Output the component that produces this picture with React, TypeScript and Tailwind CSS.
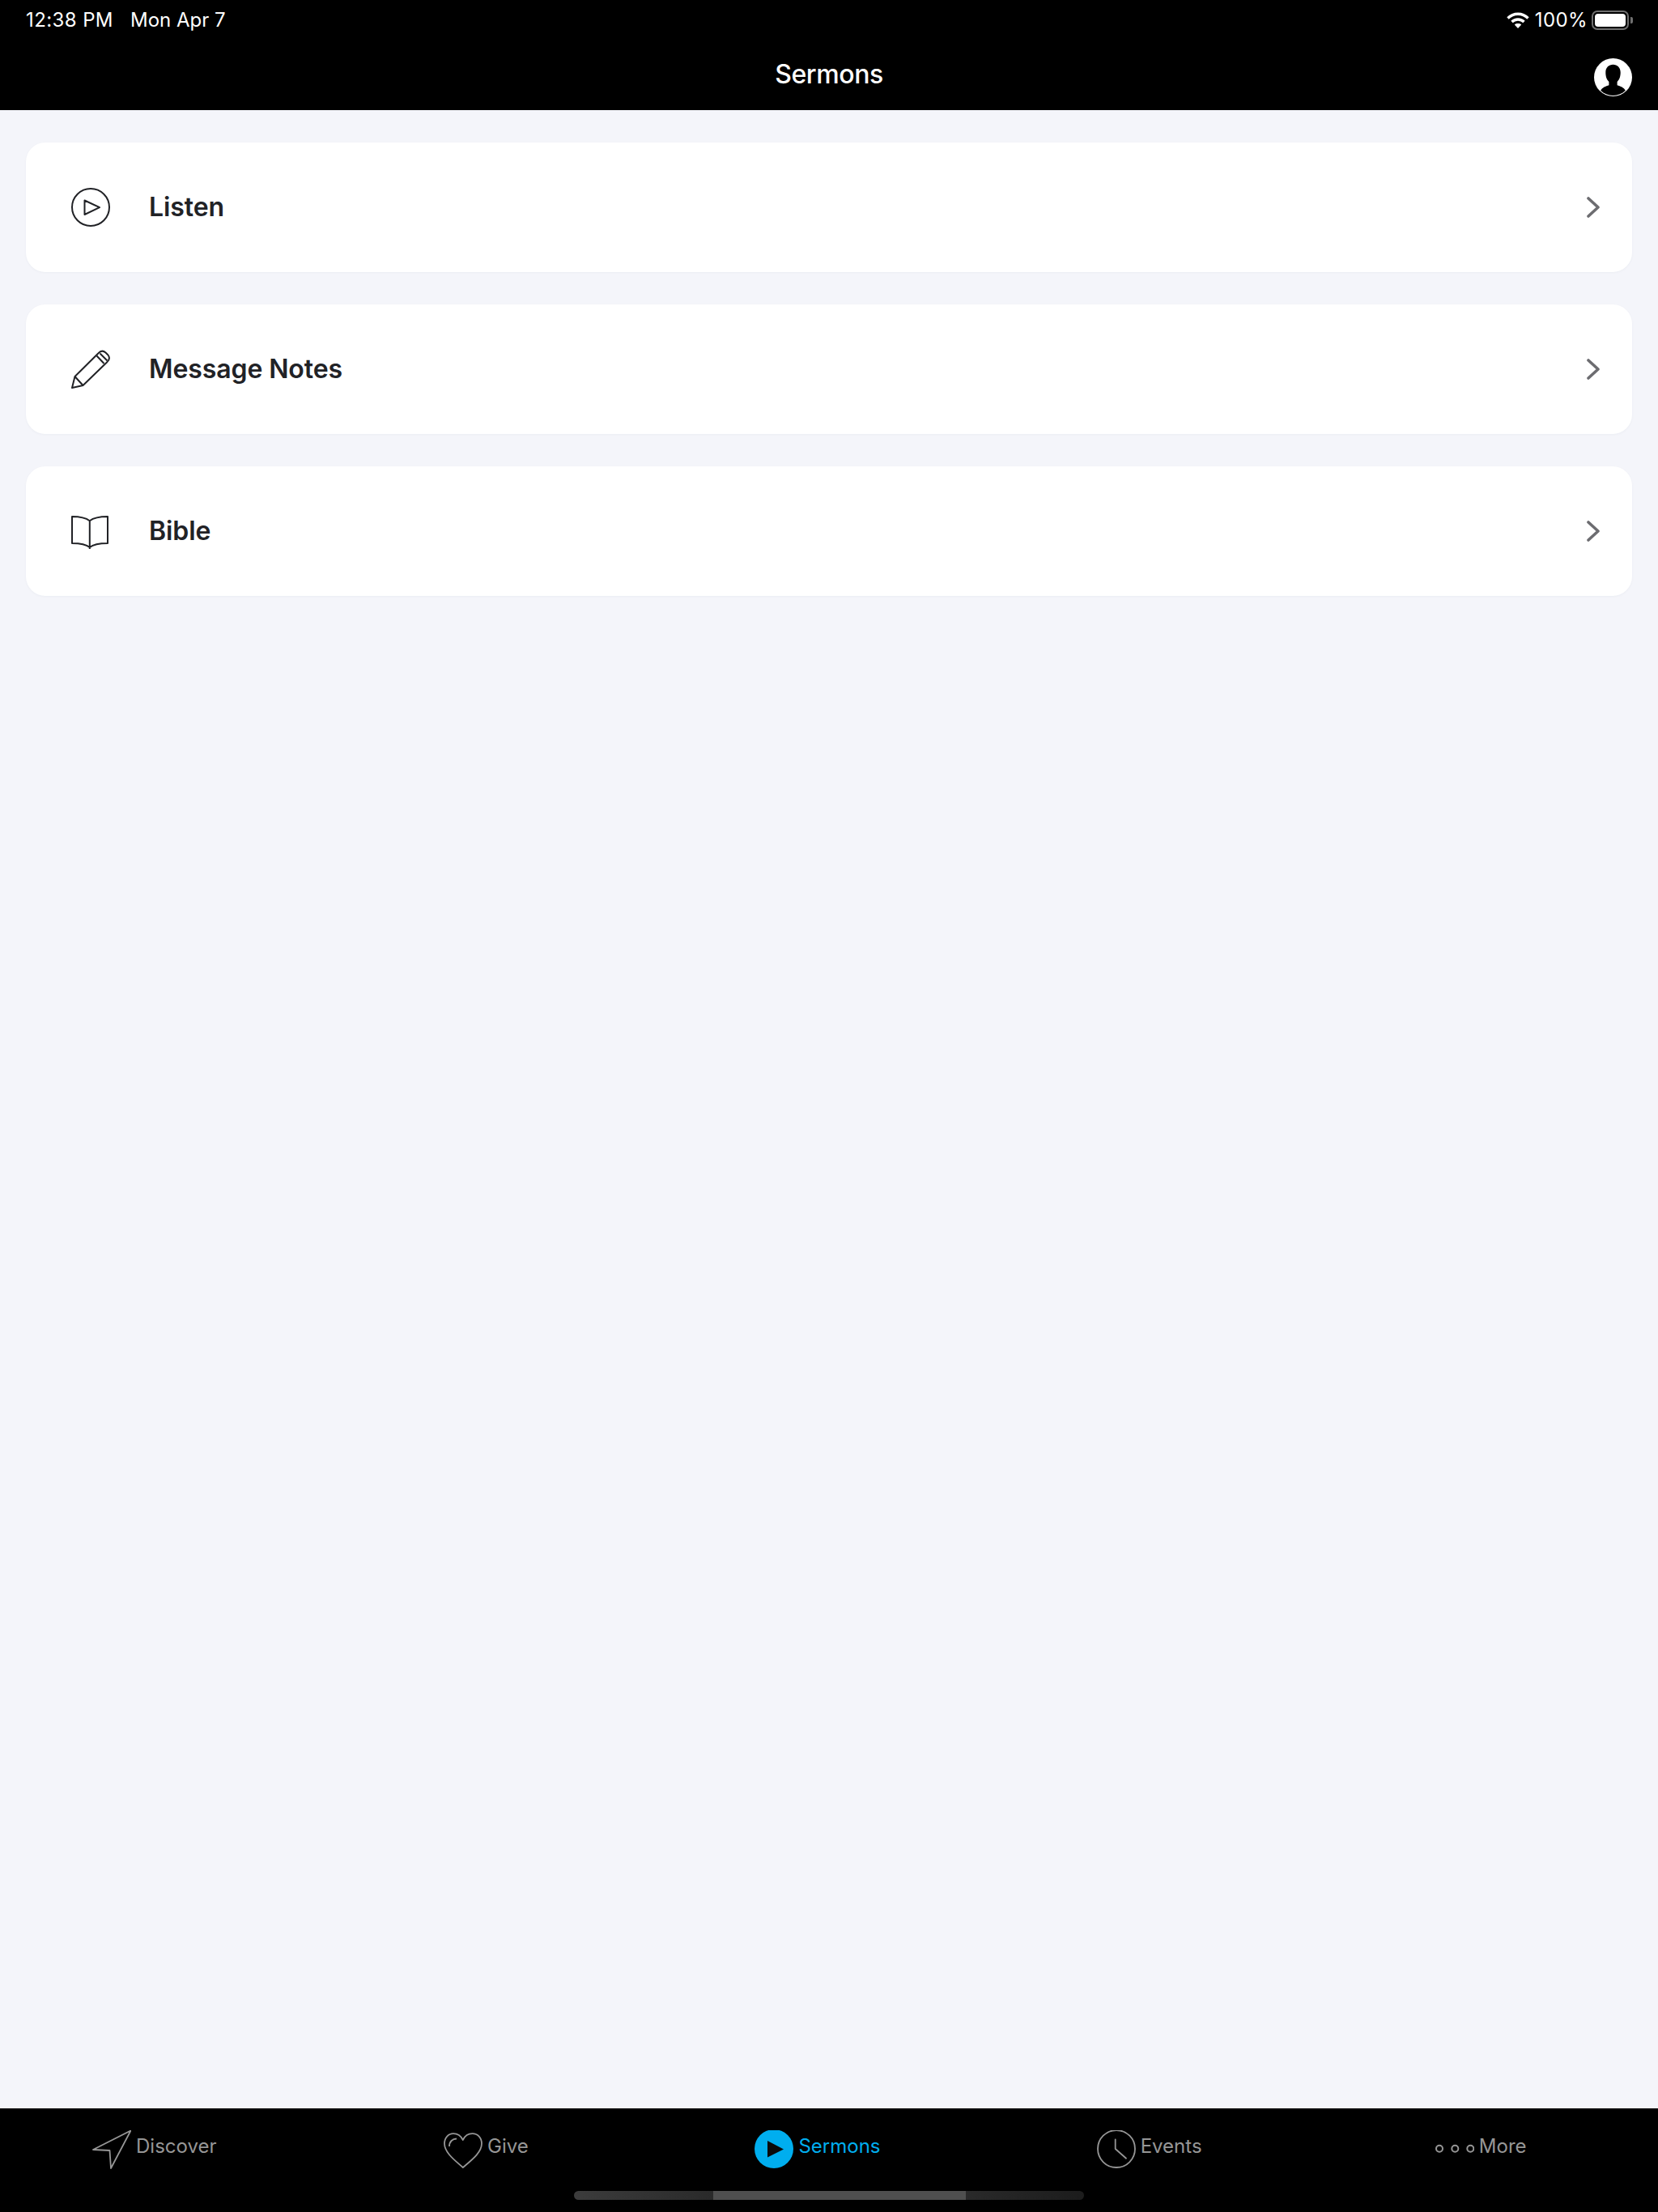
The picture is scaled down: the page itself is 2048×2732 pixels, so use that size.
import React from 'react';

const menuItems = [
  { label: 'Listen', icon: 'play' },
  { label: 'Message Notes', icon: 'pencil' },
  { label: 'Bible', icon: 'book' },
];

const MenuIcon: React.FC<{ name: string }> = ({ name }) => (
  <svg width="48" height="48" viewBox="0 0 48 48" fill="none" stroke="#212226" strokeWidth="2" strokeLinejoin="round" className="shrink-0">
    {name === 'play' && (
      <>
        <circle cx="24" cy="24" r="23" />
        <path d="M16.5 15.5V33L35 24.2Z" />
      </>
    )}
    {name === 'pencil' && (
      <>
        <path d="M1 47L4.5 33L33.5 4.2Q38 -0.5 42.5 3.5L45.5 6.5Q49 11 44 15.5L14.5 44Z" />
        <path d="M4.5 33L14.5 44M31.5 7.5L40.5 17M35.5 4.5L44.5 13.5" />
      </>
    )}
    {name === 'book' && <path d="M22.8 11.3C18 7.5 10 6 1 6V39C10 39 18 40 22.8 44C27.5 40 36 39 45 39V6C36 6 27.5 7.5 22.8 11.3V46" />}
  </svg>
);

const TabIcon: React.FC<{ name: string }> = ({ name }) => (
  <svg width="48" height="48" viewBox="0 0 48 48" fill="none" stroke="#969696" strokeWidth="1.8" strokeLinejoin="round" className="shrink-0">
    {name === 'discover' && <path d="M47.5 0.5L1 24L21.5 25L23 47Z" />}
    {name === 'give' && (
      <>
        <path d="M23.8 46C15 38 1 28 1 16.5C1 9 6 4.2 12 4.2C17 4.2 21.5 7.5 23.8 12C26 7.5 30.5 4.2 35.5 4.2C42 4.2 47 9 47 16.5C47 28 33 38 23.8 46Z" />
        <path d="M7 20C7 14 11 10.5 16 10.5" />
      </>
    )}
    {name === 'sermons' && (
      <>
        <circle cx="24" cy="23" r="24" fill="#00aeef" stroke="none" />
        <path d="M16 13L36 23.5L16 33.5Z" fill="#0a0a0a" stroke="none" />
      </>
    )}
    {name === 'events' && (
      <>
        <circle cx="24" cy="23" r="23" />
        <path d="M22.7 11.5V23L36 34.7" strokeLinecap="round" />
      </>
    )}
    {name === 'more' && (
      <>
        <circle cx="5" cy="22.7" r="4" strokeWidth="2" />
        <circle cx="24.3" cy="22.7" r="4" strokeWidth="2" />
        <circle cx="43.3" cy="22.7" r="4" strokeWidth="2" />
      </>
    )}
  </svg>
);

const tabs = [
  { label: 'Discover', icon: 'discover' },
  { label: 'Give', icon: 'give' },
  { label: 'Sermons', icon: 'sermons', active: true },
  { label: 'Events', icon: 'events' },
  { label: 'More', icon: 'more' },
];

export default function App() {
  return (
    <div className="flex h-[2732px] w-[2048px] flex-col overflow-hidden bg-[#f4f5fa] font-['Inter',sans-serif]">
      {/* Status bar */}
      <div className="flex h-[50px] items-center justify-between bg-black pl-[32px] pr-[31px] text-[24px] text-white">
        <div className="flex gap-[21px]">
          <span className="tracking-[0.4px]">12:38 PM</span>
          <span>Mon Apr 7</span>
        </div>
        <div className="flex items-center">
          <svg width="28" height="22" viewBox="0 0 28 22" fill="none" stroke="white" strokeWidth="3.4">
            <path d="M1.5 8.5C8.5 1.5 19.5 1.5 26.5 8.5" />
            <path d="M6.5 13C10.5 9 17.5 9 21.5 13" />
            <path d="M14 21L9.8 16.5C12 14.6 16 14.6 18.2 16.5Z" fill="white" stroke="none" />
          </svg>
          <span className="ml-[7px] tracking-[0.4px]">100%</span>
          <div className="ml-[5px] flex h-[24px] w-[46px] items-center rounded-[7px] border-2 border-[#6f6f6f] p-[2px]">
            <div className="h-full w-full rounded-[4px] bg-white" />
          </div>
          <div className="ml-[2px] h-[8px] w-[3px] rounded-r-[2px] bg-[#6f6f6f]" />
        </div>
      </div>

      {/* Nav bar */}
      <div className="grid h-[86px] grid-cols-3 items-center bg-black px-[32px]">
        <div />
        <h1 className="pb-[2px] text-center text-[32px] font-medium tracking-[-0.4px] text-white">Sermons</h1>
        <div className="flex justify-end pt-[4px]">
          <svg width="47" height="47" viewBox="0 0 46 46">
            <circle cx="23" cy="23" r="23" fill="white" />
            <path d="M8 39C10 35 14 34 18 32.5V28.5C14.5 25 14 20.5 14 17C14 11 18 7.5 23 7.5C28 7.5 32 11 32 17C32 20.5 31.5 25 28 28.5V32.5C32 34 36 35 38 39C34 43 29 45 23 45C17 45 12 43 8 39Z" fill="black" />
          </svg>
        </div>
      </div>

      {/* Menu */}
      <div className="flex flex-1 flex-col gap-[40px] px-[32px] pt-[40px]">
        {menuItems.map((item) => (
          <div key={item.label} className="flex h-[160px] items-center rounded-[24px] bg-white pl-[56px] pr-[40px] shadow-[0_1px_3px_rgba(30,40,80,0.04)]">
            <MenuIcon name={item.icon} />
            <span className="ml-[48px] flex-1 text-[32px] font-semibold tracking-[-0.1px] text-[#212226]">{item.label}</span>
            <svg width="16" height="26" viewBox="0 0 16 26" fill="none" stroke="#6c6c70" strokeWidth="3.6" strokeLinecap="round" strokeLinejoin="round">
              <path d="M2 2L14 13L2 24" />
            </svg>
          </div>
        ))}
      </div>

      {/* Tab bar */}
      <div className="flex h-[128px] flex-col bg-black pt-[27px]">
        <div className="grid grid-cols-5">
          {tabs.map((tab) => (
            <div key={tab.label} className="flex items-start justify-center gap-[6px] pr-[28px]">
              <TabIcon name={tab.icon} />
              <span className={`text-[24px] leading-[40px] ${tab.active ? 'text-[#00aeef]' : 'text-[#969696]'}`}>{tab.label}</span>
            </div>
          ))}
        </div>
        <div className="ml-[709px] mt-[27px] flex h-[11px] w-[630px] overflow-hidden rounded-[6px]">
          <div className="w-[172px] bg-gradient-to-r from-[#3c3c3c] to-[#2a2a2a]" />
          <div className="w-[312px] bg-[#4f4f4f]" />
          <div className="w-[146px] bg-gradient-to-r from-[#2a2a2a] to-[#1c1c1c]" />
        </div>
      </div>
    </div>
  );
}
